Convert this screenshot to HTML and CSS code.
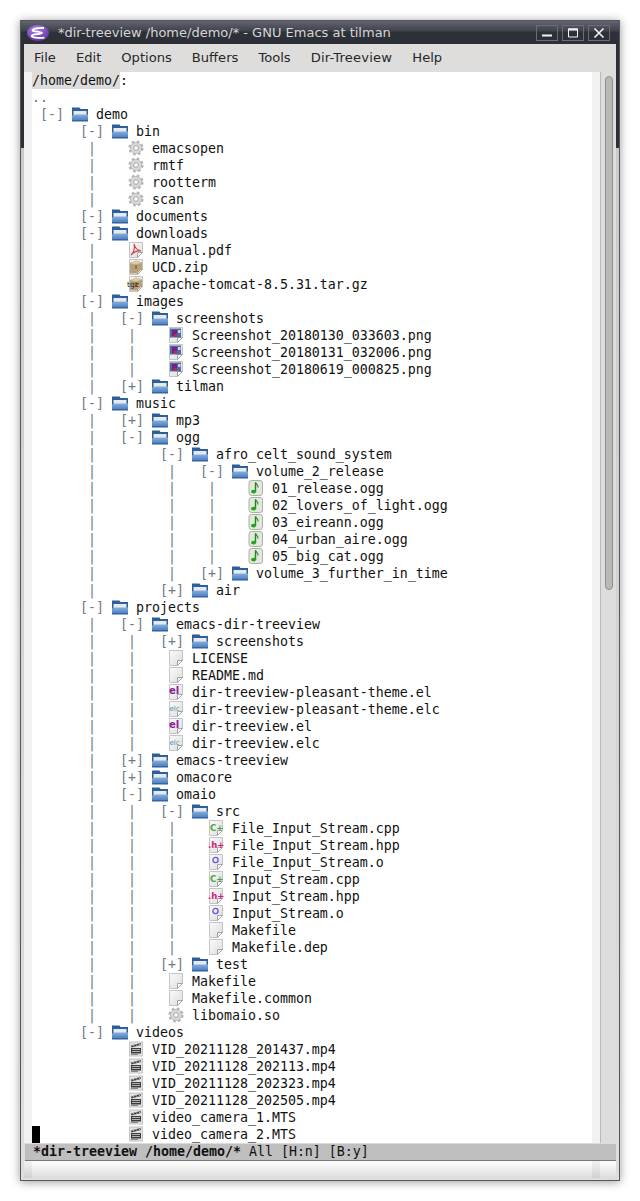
FILE: index.html
```html
<!DOCTYPE html>
<html lang="en">
<head>
<meta charset="utf-8">
<title>*dir-treeview /home/demo/* - GNU Emacs at tilman</title>
<link rel="stylesheet" href="styles.css">
</head>
<body>
<svg class="defs" aria-hidden="true">
  <linearGradient id="fold" x1="0" y1="0" x2="0" y2="1"><stop offset="0" stop-color="#86aede"/><stop offset="1" stop-color="#4a7fbe"/></linearGradient>
  <linearGradient id="pg" x1="0" y1="0" x2="1" y2="1"><stop offset="0" stop-color="#fbfbfb"/><stop offset="1" stop-color="#dcdcdc"/></linearGradient>
  <radialGradient id="logo" cx="0.4" cy="0.25" r="0.85"><stop offset="0" stop-color="#a582e0"/><stop offset="1" stop-color="#5a2da0"/></radialGradient>
  <symbol id="folder" viewBox="0 0 16 16"><path d="M0 1.5h7.5l1 1.5H16v12H0z" fill="#2c5f9c"/><rect x="1.5" y="5" width="13" height="4" fill="#e6eaee"/><path d="M0 9.5 L3 8.5H16v6H0z" fill="url(#fold)"/><path d="M0 14.5h16v1H0z" fill="#2c5f9c"/></symbol>
  <symbol id="gear" viewBox="0 0 16 16"><circle cx="8" cy="8" r="6.5" fill="none" stroke="#b4b4b4" stroke-width="2.2" stroke-dasharray="2.7 2.4"/><circle cx="8" cy="8" r="5.6" fill="#d9d9d9" stroke="#adadad" stroke-width=".7"/><circle cx="8" cy="8" r="2.4" fill="#f6f6f6" stroke="#999" stroke-width=".8"/></symbol>
  <symbol id="page" viewBox="0 0 16 16"><path d="M1.5 .5h13v10l-5 5h-8z" fill="url(#pg)" stroke="#c4c4c4"/><path d="M14.5 10.5l-5 5v-5z" fill="#fff" stroke="#a5a5a5"/></symbol>
  <symbol id="pdf" viewBox="0 0 16 16"><use href="#page"/><path d="M6 2c1 3 2 6 7 7-4-.5-7 .5-10 4 3-3 4-7 3-11z" fill="none" stroke="#d0423c" stroke-width="1.1"/></symbol>
  <symbol id="zip" viewBox="0 0 16 16"><use href="#page"/><path d="M2 4l6-2.5 6 2V10l-5 4.5H2z" fill="#b9a078"/><path d="M2 4l6-2.5 6 2-6 2.2z" fill="#dccaa6"/><rect x="7" y="6" width="2" height="4" fill="#8d7450"/></symbol>
  <symbol id="img" viewBox="0 0 16 16"><use href="#page"/><rect x="2" y="1.5" width="11" height="9" fill="#4a6aa8"/><rect x="4" y="3" width="5" height="6" fill="#7a1f86"/><rect x="6" y="7" width="3" height="3" fill="#b43050"/><rect x="10" y="3" width="2.5" height="3" fill="#c8d4ec"/></symbol>
  <symbol id="note" viewBox="0 0 16 16"><rect x="1" y=".5" width="13.5" height="15" rx="2.5" fill="#e3e8dc" stroke="#aab2a4"/><path d="M7.5 2.5v9" stroke="#1c8a1c" stroke-width="1.4"/><path d="M7.5 2.5c.5 2 3 2.5 2.5 5" fill="none" stroke="#1c8a1c" stroke-width="1.1"/><ellipse cx="5.6" cy="11.6" rx="2.6" ry="1.9" fill="#22a622"/></symbol>
  <symbol id="obj" viewBox="0 0 16 16"><use href="#page"/><circle cx="7.5" cy="6" r="2.6" fill="none" stroke="#6b55d8" stroke-width="1.3"/></symbol>
  <symbol id="vid" viewBox="0 0 16 16"><rect x="1.5" y="1" width="13" height="14" fill="#e2e2e2" stroke="#c4c4c4"/><path d="M3 4.5L12.5 2l.5 2L3.5 6.5z" fill="#444"/><path d="M3 7h10v5.5H3z" fill="#3a3a3a"/><path d="M5 4.2l1 1.2M8 3.4l1 1.2M11 2.7l1 1.2" stroke="#eee"/><path d="M4 8.5h8M4 10.5h8" stroke="#b5b5b5"/><path d="M3 13.5h7" stroke="#888"/></symbol>
</svg>
<div class="window">
  <header class="titlebar">
    <svg class="logo" viewBox="0 0 22 16"><ellipse cx="11" cy="8" rx="11" ry="8" fill="url(#logo)"/><path d="M17 3C12 2.6 6 3.6 5.5 5.2 5 6.8 15 6.4 15 8 15 9.4 5 9 4.6 10.6 4.2 12.6 12 13.2 17.5 12.6" fill="none" stroke="#fff" stroke-width="1.8"/></svg>
    <span class="wintitle">*dir-treeview /home/demo/* - GNU Emacs at tilman</span>
    <div class="winbtns">
      <span class="winbtn"><svg viewBox="0 0 20 14"><path d="M5 9.5h10" stroke="#f4f4f4" stroke-width="2"/></svg></span>
      <span class="winbtn"><svg viewBox="0 0 20 14"><path d="M5.5 3h9v8h-9z" fill="none" stroke="#f4f4f4" stroke-width="1"/><path d="M5 3.5h10" stroke="#f4f4f4" stroke-width="2"/></svg></span>
      <span class="winbtn"><svg viewBox="0 0 20 14"><path d="M5.5 2.5l9 9M14.5 2.5l-9 9" stroke="#f4f4f4" stroke-width="1.6"/></svg></span>
    </div>
  </header>
  <nav class="menubar"><span>File</span><span>Edit</span><span>Options</span><span>Buffers</span><span>Tools</span><span class="wide">Dir-Treeview</span><span>Help</span></nav>
  <div class="main">
    <div class="fringe"></div>
    <div class="buffer">
<div class="row"><span class="hdr">/home/demo/</span>:</div>
<div class="row"><span class="g">..</span></div>
<div class="row"><i class="g"> [-] </i><svg class="ic"><use href="#folder"/></svg> demo</div>
<div class="row"><i class="g">      [-] </i><svg class="ic"><use href="#folder"/></svg> bin</div>
<div class="row"><i class="g">       |    </i><svg class="ic"><use href="#gear"/></svg> emacsopen</div>
<div class="row"><i class="g">       |    </i><svg class="ic"><use href="#gear"/></svg> rmtf</div>
<div class="row"><i class="g">       |    </i><svg class="ic"><use href="#gear"/></svg> rootterm</div>
<div class="row"><i class="g">       |    </i><svg class="ic"><use href="#gear"/></svg> scan</div>
<div class="row"><i class="g">      [-] </i><svg class="ic"><use href="#folder"/></svg> documents</div>
<div class="row"><i class="g">      [-] </i><svg class="ic"><use href="#folder"/></svg> downloads</div>
<div class="row"><i class="g">       |    </i><svg class="ic"><use href="#pdf"/></svg> Manual.pdf</div>
<div class="row"><i class="g">       |    </i><svg class="ic"><use href="#zip"/></svg> UCD.zip</div>
<div class="row"><i class="g">       |    </i><svg class="ic" viewBox="0 0 16 16"><use href="#zip"/><text x="-1" y="10.5" class="ic-tgz">tgz</text></svg> apache-tomcat-8.5.31.tar.gz</div>
<div class="row"><i class="g">      [-] </i><svg class="ic"><use href="#folder"/></svg> images</div>
<div class="row"><i class="g">       |   [-] </i><svg class="ic"><use href="#folder"/></svg> screenshots</div>
<div class="row"><i class="g">       |    |    </i><svg class="ic"><use href="#img"/></svg> Screenshot_20180130_033603.png</div>
<div class="row"><i class="g">       |    |    </i><svg class="ic"><use href="#img"/></svg> Screenshot_20180131_032006.png</div>
<div class="row"><i class="g">       |    |    </i><svg class="ic"><use href="#img"/></svg> Screenshot_20180619_000825.png</div>
<div class="row"><i class="g">       |   [+] </i><svg class="ic"><use href="#folder"/></svg> tilman</div>
<div class="row"><i class="g">      [-] </i><svg class="ic"><use href="#folder"/></svg> music</div>
<div class="row"><i class="g">       |   [+] </i><svg class="ic"><use href="#folder"/></svg> mp3</div>
<div class="row"><i class="g">       |   [-] </i><svg class="ic"><use href="#folder"/></svg> ogg</div>
<div class="row"><i class="g">       |        [-] </i><svg class="ic"><use href="#folder"/></svg> afro_celt_sound_system</div>
<div class="row"><i class="g">       |         |   [-] </i><svg class="ic"><use href="#folder"/></svg> volume_2_release</div>
<div class="row"><i class="g">       |         |    |    </i><svg class="ic"><use href="#note"/></svg> 01_release.ogg</div>
<div class="row"><i class="g">       |         |    |    </i><svg class="ic"><use href="#note"/></svg> 02_lovers_of_light.ogg</div>
<div class="row"><i class="g">       |         |    |    </i><svg class="ic"><use href="#note"/></svg> 03_eireann.ogg</div>
<div class="row"><i class="g">       |         |    |    </i><svg class="ic"><use href="#note"/></svg> 04_urban_aire.ogg</div>
<div class="row"><i class="g">       |         |    |    </i><svg class="ic"><use href="#note"/></svg> 05_big_cat.ogg</div>
<div class="row"><i class="g">       |         |   [+] </i><svg class="ic"><use href="#folder"/></svg> volume_3_further_in_time</div>
<div class="row"><i class="g">       |        [+] </i><svg class="ic"><use href="#folder"/></svg> air</div>
<div class="row"><i class="g">      [-] </i><svg class="ic"><use href="#folder"/></svg> projects</div>
<div class="row"><i class="g">       |   [-] </i><svg class="ic"><use href="#folder"/></svg> emacs-dir-treeview</div>
<div class="row"><i class="g">       |    |   [+] </i><svg class="ic"><use href="#folder"/></svg> screenshots</div>
<div class="row"><i class="g">       |    |    </i><svg class="ic"><use href="#page"/></svg> LICENSE</div>
<div class="row"><i class="g">       |    |    </i><svg class="ic"><use href="#page"/></svg> README.md</div>
<div class="row"><i class="g">       |    |    </i><svg class="ic" viewBox="0 0 16 16"><use href="#page"/><text x="1" y="10" class="ic-el">el</text></svg> dir-treeview-pleasant-theme.el</div>
<div class="row"><i class="g">       |    |    </i><svg class="ic" viewBox="0 0 16 16"><use href="#page"/><text x="1.5" y="9.5" class="ic-elc">elc</text></svg> dir-treeview-pleasant-theme.elc</div>
<div class="row"><i class="g">       |    |    </i><svg class="ic" viewBox="0 0 16 16"><use href="#page"/><text x="1" y="10" class="ic-el">el</text></svg> dir-treeview.el</div>
<div class="row"><i class="g">       |    |    </i><svg class="ic" viewBox="0 0 16 16"><use href="#page"/><text x="1.5" y="9.5" class="ic-elc">elc</text></svg> dir-treeview.elc</div>
<div class="row"><i class="g">       |   [+] </i><svg class="ic"><use href="#folder"/></svg> emacs-treeview</div>
<div class="row"><i class="g">       |   [+] </i><svg class="ic"><use href="#folder"/></svg> omacore</div>
<div class="row"><i class="g">       |   [-] </i><svg class="ic"><use href="#folder"/></svg> omaio</div>
<div class="row"><i class="g">       |    |   [-] </i><svg class="ic"><use href="#folder"/></svg> src</div>
<div class="row"><i class="g">       |    |    |    </i><svg class="ic" viewBox="0 0 16 16"><use href="#page"/><text x="2" y="10.5" class="ic-c">C+</text></svg> File_Input_Stream.cpp</div>
<div class="row"><i class="g">       |    |    |    </i><svg class="ic" viewBox="0 0 16 16"><use href="#page"/><text x="0" y="10.5" class="ic-h">.h+</text></svg> File_Input_Stream.hpp</div>
<div class="row"><i class="g">       |    |    |    </i><svg class="ic"><use href="#obj"/></svg> File_Input_Stream.o</div>
<div class="row"><i class="g">       |    |    |    </i><svg class="ic" viewBox="0 0 16 16"><use href="#page"/><text x="2" y="10.5" class="ic-c">C+</text></svg> Input_Stream.cpp</div>
<div class="row"><i class="g">       |    |    |    </i><svg class="ic" viewBox="0 0 16 16"><use href="#page"/><text x="0" y="10.5" class="ic-h">.h+</text></svg> Input_Stream.hpp</div>
<div class="row"><i class="g">       |    |    |    </i><svg class="ic"><use href="#obj"/></svg> Input_Stream.o</div>
<div class="row"><i class="g">       |    |    |    </i><svg class="ic"><use href="#page"/></svg> Makefile</div>
<div class="row"><i class="g">       |    |    |    </i><svg class="ic"><use href="#page"/></svg> Makefile.dep</div>
<div class="row"><i class="g">       |    |   [+] </i><svg class="ic"><use href="#folder"/></svg> test</div>
<div class="row"><i class="g">       |    |    </i><svg class="ic"><use href="#page"/></svg> Makefile</div>
<div class="row"><i class="g">       |    |    </i><svg class="ic"><use href="#page"/></svg> Makefile.common</div>
<div class="row"><i class="g">       |    |    </i><svg class="ic"><use href="#gear"/></svg> libomaio.so</div>
<div class="row"><i class="g">      [-] </i><svg class="ic"><use href="#folder"/></svg> videos</div>
<div class="row"><i class="g">            </i><svg class="ic"><use href="#vid"/></svg> VID_20211128_201437.mp4</div>
<div class="row"><i class="g">            </i><svg class="ic"><use href="#vid"/></svg> VID_20211128_202113.mp4</div>
<div class="row"><i class="g">            </i><svg class="ic"><use href="#vid"/></svg> VID_20211128_202323.mp4</div>
<div class="row"><i class="g">            </i><svg class="ic"><use href="#vid"/></svg> VID_20211128_202505.mp4</div>
<div class="row"><i class="g">            </i><svg class="ic"><use href="#vid"/></svg> video_camera_1.MTS</div>
<div class="row"><b class="cursor"> </b><i class="g">           </i><svg class="ic"><use href="#vid"/></svg> video_camera_2.MTS</div>
    </div>
    <div class="fringe fringe-r"></div>
    <div class="scrollbar"><div class="thumb"></div></div>
  </div>
  <div class="modeline"><b>*dir-treeview /home/demo/*</b> All [H:n] [B:y]</div>
  <div class="echo"></div>
</div>
</body>
</html>
```
FILE: styles.css
```css
html, body { margin: 0; padding: 0; background: #fff; }
body { height: 1201px; overflow: hidden; }
.defs { width: 0; height: 0; display: block; }
.ic-tgz { font: 7.5px "DejaVu Sans", sans-serif; fill: #222; }
.ic-el { font: bold 10px "DejaVu Sans", sans-serif; fill: #8a1f96; }
.ic-elc { font: 7px "DejaVu Sans", sans-serif; fill: #3f97a8; }
.ic-c { font: bold 8.5px "DejaVu Sans", sans-serif; fill: #3ea83a; }
.ic-h { font: bold 8.5px "DejaVu Sans", sans-serif; fill: #d01a78; }

.window {
  margin: 20px;
  width: 600px;
  height: 1161px;
  box-sizing: border-box;
  display: flex;
  flex-direction: column;
  border: 1px solid #55575c;
  padding: 0 3px 2px;
  background: linear-gradient(to bottom, #2c2f36 0, #2c2f36 127px, #c9c9c9 127px, #dedede 100%);
  box-shadow: 0 1px 9px rgba(0, 0, 0, .4);
}
.titlebar {
  height: 23px;
  flex: none;
  margin: 0 -3px;
  padding: 0 6px;
  display: flex;
  align-items: center;
  background: linear-gradient(to bottom, #62646f 0, #3f414c 10px, #2f3139 11px, #2c2f36 100%);
}
.logo { width: 22px; height: 16px; flex: none; margin-right: 9px; }
.wintitle { font: 13px "DejaVu Sans", sans-serif; color: #d6d6d6; white-space: pre; }
.winbtns { margin-left: auto; margin-right: 3px; display: flex; gap: 4px; }
.winbtn {
  width: 22px;
  height: 16px;
  box-sizing: border-box;
  border: 1px solid #6a6d74;
  display: flex;
}
.winbtn svg { width: 20px; height: 14px; }

.menubar {
  height: 28px;
  flex: none;
  box-sizing: border-box;
  padding-bottom: 2px;
  background: #dfdddb;
  display: flex;
  align-items: center;
  font: 13.1px "DejaVu Sans", sans-serif;
  color: #23282a;
}
.menubar span { padding: 0 10px; }
.menubar .wide { letter-spacing: .2px; }

.main { flex: 1; min-height: 0; display: flex; background: #fff; }
.fringe { width: 8px; flex: none; background: #f2f2f2; }
.buffer {
  flex: 1;
  min-width: 0;
  overflow: hidden;
  font-family: "DejaVu Sans Mono", monospace;
  font-size: 13.29px;
  color: #111;
}
.row { height: 17px; line-height: 17px; white-space: pre; }
.hdr { background: #dfdddb; display: inline-block; }
.g { color: #6f7a88; font-style: normal; }
.ic { width: 16px; height: 16px; vertical-align: -3px; overflow: visible; }
.cursor { display: inline-block; width: 8px; height: 17px; background: #000; vertical-align: top; }
.scrollbar {
  width: 16px;
  flex: none;
  box-sizing: border-box;
  border-left: 1px solid #b9b9b9;
  background: #dfdddb;
  padding: 4px 3px 0 4px;
}
.thumb {
  height: 514px;
  box-sizing: border-box;
  background: #b9b9b5;
  border: 1px solid #8f8f8f;
  border-radius: 4px;
}

.modeline {
  height: 18px;
  flex: none;
  box-sizing: border-box;
  background: #bfbfbf;
  border-top: 1px solid #dcdcdc;
  border-bottom: 1px solid #777;
  margin-left: 1px;
  padding-left: 8px;
  font: 13.29px/16px "DejaVu Sans Mono", monospace;
  color: #111;
  white-space: pre;
}
.echo {
  height: 17px;
  flex: none;
  background:
    linear-gradient(to right, rgba(0,0,0,.05) 8px, transparent 8px, transparent 568px, rgba(0,0,0,.05) 568px, rgba(0,0,0,.05) 576px, transparent 576px),
    linear-gradient(to bottom, #fff, #dcdcdc);
}
```
